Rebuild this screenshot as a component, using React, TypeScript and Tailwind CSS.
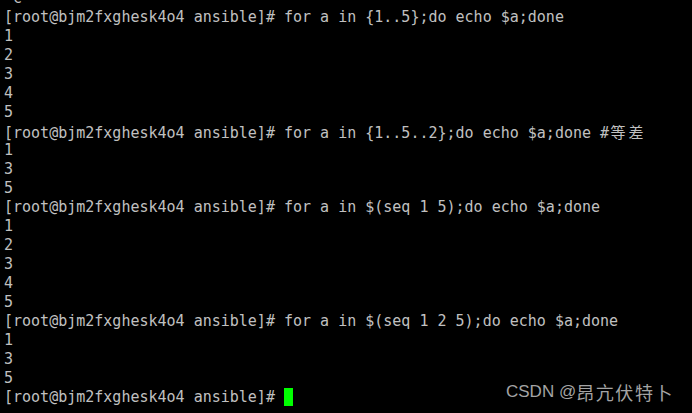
import React from "react";

const P = "[root@bjm2fxghesk4o4 ansible]# ";

function Line({ children }: { children?: React.ReactNode }) {
  return <div className="h-[19px] leading-[19px] whitespace-pre">{children}</div>;
}

function Wide({ c }: { c: string }) {
  return (
    <span
      className="inline-block w-[18px] text-center"
      style={{ fontFamily: '"Noto Sans CJK SC", sans-serif' }}
    >
      {c}
    </span>
  );
}

export default function App() {
  const lines: React.ReactNode[] = [
    " c",
    P + "for a in {1..5};do echo $a;done",
    "1",
    "2",
    "3",
    "4",
    "5",
    <>
      {P + "for a in {1..5..2};do echo $a;done #"}
      <Wide c="等" />
      <Wide c="差" />
    </>,
    "1",
    "3",
    "5",
    P + "for a in $(seq 1 5);do echo $a;done",
    "1",
    "2",
    "3",
    "4",
    "5",
    P + "for a in $(seq 1 2 5);do echo $a;done",
    "1",
    "3",
    "5",
    <>
      {P}
      <span className="inline-block w-[9px] h-[18px] bg-[#00ff00] align-[-4px]" />
    </>,
  ];
  return (
    <div className="relative w-[692px] h-[413px] overflow-hidden bg-black">
      <div
        className="-mt-[11px] pl-[4px] text-[15px] text-[#c0c0c0]"
        style={{ fontFamily: '"DejaVu Sans Mono", monospace' }}
      >
        {lines.map((l, i) => (
          <Line key={i}>{l}</Line>
        ))}
      </div>
      <div
        className="absolute left-[506px] top-[381px] flex items-center h-[22px] text-[#a4a4a4] whitespace-nowrap"
        style={{ fontFamily: '"Liberation Sans", "Noto Sans CJK SC", sans-serif' }}
      >
        <span className="text-[17px]">CSDN @</span>
        <span
          className="text-[18px] tracking-[1.6px]"
          style={{ fontFamily: '"Noto Sans CJK SC", sans-serif' }}
        >
          昂亢伏特卜
        </span>
      </div>
    </div>
  );
}
